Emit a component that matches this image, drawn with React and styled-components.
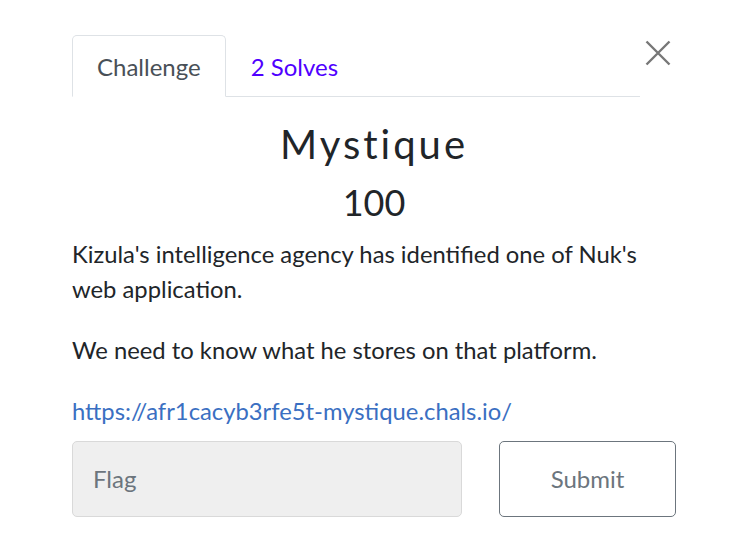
import React from "react";
import styled, { createGlobalStyle } from "styled-components";

const GlobalStyle = createGlobalStyle`
  html, body {
    margin: 0;
    padding: 0;
    background: #fff;
  }
  body {
    font-family: Lato, "Open Sans", "Liberation Sans", sans-serif;
    color: #212529;
  }
`;

const Modal = styled.div`
  width: 747px;
  height: 552px;
  box-sizing: border-box;
  padding: 35px 71px 0 72px;
  background: #fff;
`;

const Header = styled.div`
  display: flex;
  align-items: flex-start;
`;

const Tabs = styled.ul`
  flex: 1;
  display: flex;
  margin: 0;
  padding: 0;
  list-style: none;
  border-bottom: 1px solid #dee2e6;
`;

const Tab = styled.li`
  margin-bottom: -1px;
`;

const TabLink = styled.a`
  display: block;
  box-sizing: border-box;
  height: 62px;
  padding: 0 24px;
  line-height: 61px;
  font-size: 24px;
  text-decoration: none;
  border: 1px solid ${(p) => (p.active ? "#dee2e6" : "transparent")};
  border-bottom-color: ${(p) => (p.active ? "#fff" : "transparent")};
  border-radius: 5px 5px 0 0;
  color: ${(p) => (p.active ? "#495057" : "#5000ff")};
  background: ${(p) => (p.active ? "#fff" : "transparent")};
`;

const Close = styled.button`
  width: 36px;
  height: 36px;
  padding: 0;
  border: 0;
  background: transparent;
  display: flex;
  align-items: center;
  justify-content: center;
  cursor: pointer;
`;

const Title = styled.h2`
  margin: 23px 0 0;
  text-align: center;
  font-size: 40px;
  font-weight: 400;
  line-height: 1.2;
  letter-spacing: 3px;
`;

const Score = styled.h3`
  margin: 13px 0 0;
  text-align: center;
  font-size: 36px;
  font-weight: 400;
  line-height: 1.2;
`;

const Description = styled.div`
  margin-top: 13px;
  font-size: 23.8px;
  line-height: 35px;
`;

const Para = styled.p`
  margin: 0 0 ${(p) => (p.last ? "0" : "26px")};
`;

const Link = styled.a`
  color: #3a6fc2;
  text-decoration: none;
`;

const Form = styled.form`
  display: grid;
  grid-template-columns: 390px 177px;
  justify-content: space-between;
  margin-top: 12px;
`;

const FlagInput = styled.input`
  box-sizing: border-box;
  height: 76px;
  padding: 0 20px 2px;
  font-family: inherit;
  font-size: 24px;
  color: #495057;
  background: #efefef;
  border: 1px solid #d9d9d9;
  border-radius: 5px;
  outline: none;

  &::placeholder {
    color: #6c757d;
  }
`;

const SubmitButton = styled.button`
  box-sizing: border-box;
  height: 76px;
  padding-bottom: 2px;
  font-family: inherit;
  font-size: 24px;
  color: #6c757d;
  background: #fff;
  border: 1px solid #6c757d;
  border-radius: 5px;
  cursor: pointer;
`;

export default function App() {
  return (
    <>
      <GlobalStyle />
      <Modal>
        <Header>
          <Tabs>
            <Tab>
              <TabLink href="#" active>
                Challenge
              </TabLink>
            </Tab>
            <Tab>
              <TabLink href="#">2 Solves</TabLink>
            </Tab>
          </Tabs>
          <Close aria-label="Close">
            <svg width="26" height="26" viewBox="0 0 26 26">
              <path
                d="M1.5 1.5 L24.5 24.5 M24.5 1.5 L1.5 24.5"
                stroke="#777"
                strokeWidth="2.4"
                fill="none"
              />
            </svg>
          </Close>
        </Header>
        <Title>Mystique</Title>
        <Score>100</Score>
        <Description>
          <Para>
            Kizula's intelligence agency has identified one of Nuk's web
            application.
          </Para>
          <Para>We need to know what he stores on that platform.</Para>
          <Para last>
            <Link href="#">https://afr1cacyb3rfe5t-mystique.chals.io/</Link>
          </Para>
        </Description>
        <Form onSubmit={(e) => e.preventDefault()}>
          <FlagInput placeholder="Flag" />
          <SubmitButton type="submit">Submit</SubmitButton>
        </Form>
      </Modal>
    </>
  );
}
